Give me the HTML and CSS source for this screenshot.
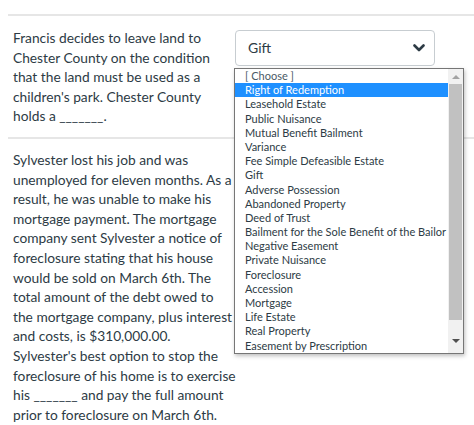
FILE: index.html
```html
<!DOCTYPE html>
<html>
<head>
<meta charset="utf-8">
<link rel="stylesheet" href="styles.css">
</head>
<body>
<div class="page">
  <div class="question">
    <div class="qtext">Francis decides to leave land to<br>Chester County on the condition<br>that the land must be used as a<br>children's park. Chester County<br>holds a _______.</div>
    <div class="answer">
      <div class="select">
        <span class="value">Gift</span>
        <svg class="chev" width="12" height="8" viewBox="0 0 12 8"><path d="M1.5 1.5 L6 6 L10.5 1.5" fill="none" stroke="#2d3b45" stroke-width="2.6" stroke-linecap="round" stroke-linejoin="round"/></svg>
      </div>
      <div class="listbox">
        <ul class="options">
          <li class="opt placeholder">[ Choose ]</li>
          <li class="opt selected">Right of Redemption</li>
          <li class="opt">Leasehold Estate</li>
          <li class="opt">Public Nuisance</li>
          <li class="opt">Mutual Benefit Bailment</li>
          <li class="opt">Variance</li>
          <li class="opt">Fee Simple Defeasible Estate</li>
          <li class="opt">Gift</li>
          <li class="opt">Adverse Possession</li>
          <li class="opt">Abandoned Property</li>
          <li class="opt">Deed of Trust</li>
          <li class="opt">Bailment for the Sole Benefit of the Bailor</li>
          <li class="opt">Negative Easement</li>
          <li class="opt">Private Nuisance</li>
          <li class="opt">Foreclosure</li>
          <li class="opt">Accession</li>
          <li class="opt">Mortgage</li>
          <li class="opt">Life Estate</li>
          <li class="opt">Real Property</li>
          <li class="opt">Easement by Prescription</li>
        </ul>
        <div class="scrollbar">
          <div class="arrow up"></div>
          <div class="thumb"></div>
          <div class="arrow down"></div>
        </div>
      </div>
    </div>
  </div>
  <div class="question">
    <div class="qtext q2">Sylvester lost his job and was<br>unemployed for eleven months. As a<br>result, he was unable to make his<br>mortgage payment. The mortgage<br>company sent Sylvester a notice of<br>foreclosure stating that his house<br>would be sold on March 6th. The<br>total amount of the debt owed to<br>the mortgage company, plus interest<br>and costs, is $310,000.00.<br>Sylvester's best option to stop the<br>foreclosure of his home is to exercise<br>his _______ and pay the full amount<br>prior to foreclosure on March 6th.</div>
    <div class="answer"></div>
  </div>
</div>
</body>
</html>
```
FILE: styles.css
```css
html, body {
  margin: 0;
  padding: 0;
  background: #ffffff;
}
.page {
  padding: 14px 0 0 8px;
  font-family: Lato, "Noto Sans", sans-serif;
  color: #2d3b45;
}
.question {
  display: flex;
  border-top: 2px solid #e6e6e6;
}
.qtext {
  flex: none;
  width: 227px;
  padding: 12px 0 11px 5px;
  font-size: 13.75px;
  line-height: 19.6px;
  white-space: nowrap;
  box-sizing: border-box;
}
.qtext.q2 {
  padding-top: 11px;
}
.answer {
  position: relative;
  padding-top: 14px;
}
.select {
  width: 200px;
  height: 36px;
  box-sizing: border-box;
  border: 1px solid #c7cdd1;
  border-radius: 4px;
  display: flex;
  align-items: center;
  justify-content: space-between;
  padding: 0 9px 0 12px;
  font-size: 14px;
  background: #fff;
}
.value {
  margin-top: -1px;
}
.chev {
  display: block;
}
.listbox {
  position: absolute;
  top: 52px;
  left: -1px;
  width: 230px;
  height: 286px;
  box-sizing: border-box;
  border: 1px solid #767676;
  background: #fff;
  box-shadow: 1px 2px 4px rgba(0,0,0,0.25);
  display: flex;
  z-index: 5;
}
.options {
  list-style: none;
  margin: 0;
  padding: 0;
  flex: 1;
  overflow: hidden;
}
.opt {
  height: 14.2px;
  line-height: 14.2px;
  font-size: 11px;
  padding-left: 10px;
  white-space: nowrap;
  color: #2d3b45;
}
.opt.placeholder {
  color: #4a5a66;
}
.opt.selected {
  background: #1e90ff;
  color: #ffffff;
}
.scrollbar {
  width: 15px;
  background: #f1f1f1;
  display: flex;
  flex-direction: column;
  align-items: center;
}
.arrow {
  width: 0;
  height: 0;
  border-left: 4px solid transparent;
  border-right: 4px solid transparent;
}
.arrow.up {
  border-bottom: 4px solid #a3a3a3;
  margin: 6px 0 5px;
}
.thumb {
  width: 13px;
  height: 236px;
  background: #c1c1c1;
}
.arrow.down {
  border-top: 4px solid #505050;
  margin-top: 19px;
}
```
